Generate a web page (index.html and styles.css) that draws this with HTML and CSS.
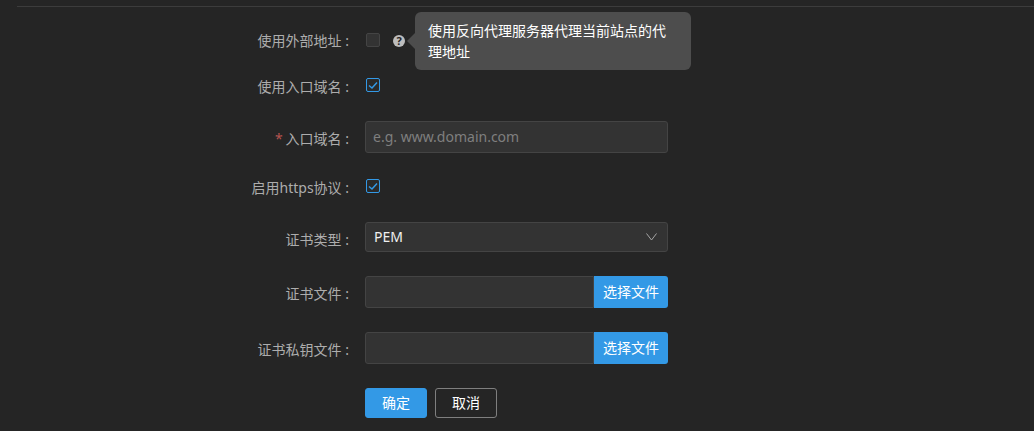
FILE: index.html
```html
<!DOCTYPE html>
<html lang="zh-CN">
<head>
<meta charset="utf-8">
<title>站点设置</title>
<link rel="stylesheet" href="styles.css">
</head>
<body>
<div class="divider"></div>
<form class="form">
  <label class="label">使用外部地址 :</label>
  <div class="control check-row first">
    <span class="checkbox"></span>
    <span class="help">?</span>
    <div class="tooltip">使用反向代理服务器代理当前站点的代理地址</div>
  </div>

  <label class="label">使用入口域名 :</label>
  <div class="control check-row">
    <span class="checkbox checked"><svg width="14" height="14" viewBox="0 0 14 14"><polyline points="3,7.5 6,10 11,4.5" /></svg></span>
  </div>

  <label class="label"><span class="req">*</span>入口域名 :</label>
  <div class="control"><div class="input placeholder">e.g. www.domain.com</div></div>

  <label class="label">启用https协议 :</label>
  <div class="control check-row">
    <span class="checkbox checked"><svg width="14" height="14" viewBox="0 0 14 14"><polyline points="3,7.5 6,10 11,4.5" /></svg></span>
  </div>

  <label class="label">证书类型 :</label>
  <div class="control">
    <div class="select"><span class="select-value">PEM</span><svg width="11" height="8" viewBox="0 0 11 8"><polyline points="0.5,0.5 5.5,7 10.5,0.5" /></svg></div>
  </div>

  <label class="label">证书文件 :</label>
  <div class="control file"><div class="file-name"></div><span class="file-btn">选择文件</span></div>

  <label class="label">证书私钥文件 :</label>
  <div class="control file"><div class="file-name"></div><span class="file-btn">选择文件</span></div>

  <div></div>
  <div class="control actions">
    <button type="button" class="btn primary">确定</button>
    <button type="button" class="btn ghost">取消</button>
  </div>
</form>
</body>
</html>
```
FILE: styles.css
```css
* { box-sizing: border-box; }
html, body { height: 100%; }
body {
  margin: 0;
  background: #252525;
  color: #adadad;
  font-family: "Noto Sans", "Noto Sans CJK SC", sans-serif;
  font-size: 14px;
  overflow: hidden;
}
.divider {
  height: 1px;
  margin: 6px 0 0 17px;
  background: #3c3c3c;
}
.form {
  display: grid;
  grid-template-columns: 332px 303px;
  grid-template-rows: 46px 52px 49px 52px 54px 56px 56px 30px;
  column-gap: 16px;
  padding: 16px 0 0 17px;
}
.label {
  height: 36px;
  line-height: 36px;
  text-align: right;
  white-space: nowrap;
}
.req { margin-right: 3px; color: #b5534f; }
.control { position: relative; display: flex; align-items: flex-start; }
.check-row { padding: 9px 0 0 1px; }
.check-row.first { padding-top: 10px; }
.checkbox {
  display: block;
  width: 14px;
  height: 14px;
  border: 1px solid #444;
  border-radius: 2px;
  background: #333;
}
.checkbox svg { display: block; margin: -1px; }
.checkbox polyline { fill: none; stroke: #3399e6; stroke-width: 1.5; }
.checkbox.checked { border-color: #3399e6; background: #2a2a2a; }
.help {
  width: 12px;
  height: 12px;
  margin: 2px 0 0 13px;
  border-radius: 50%;
  background: #bdbdbd;
  color: #252525;
  font-size: 11px;
  font-weight: 700;
  line-height: 12px;
  text-align: center;
}
.tooltip {
  position: absolute;
  left: 50px;
  top: -11px;
  width: 276px;
  height: 58px;
  padding: 8px 13px;
  border-radius: 6px;
  background: #4d4d4d;
  color: #fff;
  line-height: 21px;
}
.tooltip::before {
  content: "";
  position: absolute;
  left: -8px;
  top: 21px;
  border-style: solid;
  border-width: 8px 8px 8px 0;
  border-color: transparent #4d4d4d transparent transparent;
}
.input, .file-name, .select {
  background: #333;
  border: 1px solid #444;
}
.input {
  width: 303px;
  height: 32px;
  padding: 0 7px;
  border-radius: 3px;
  line-height: 30px;
}
.placeholder { color: #7f7f7f; }
.select {
  display: flex;
  align-items: center;
  justify-content: space-between;
  width: 303px;
  height: 30px;
  padding: 0 10px 0 8px;
  border-radius: 3px;
  color: #f0f0f0;
}
.select-value { margin-top: -2px; }
.select polyline { fill: none; stroke: #a6a6a6; stroke-width: 1; }
.file-name {
  width: 229px;
  height: 32px;
  border-radius: 3px 0 0 3px;
}
.file-btn {
  width: 74px;
  height: 32px;
  border-radius: 0 3px 3px 0;
  background: #3399e6;
  color: #fff;
  line-height: 32px;
  text-align: center;
}
.actions { gap: 8px; }
.btn {
  width: 62px;
  height: 30px;
  padding: 0;
  border-radius: 3px;
  color: #fff;
  font: inherit;
  line-height: 28px;
  cursor: pointer;
}
.primary { background: #3399e6; border: 1px solid #3399e6; }
.ghost { background: transparent; border: 1px solid #7f7f7f; }
```
